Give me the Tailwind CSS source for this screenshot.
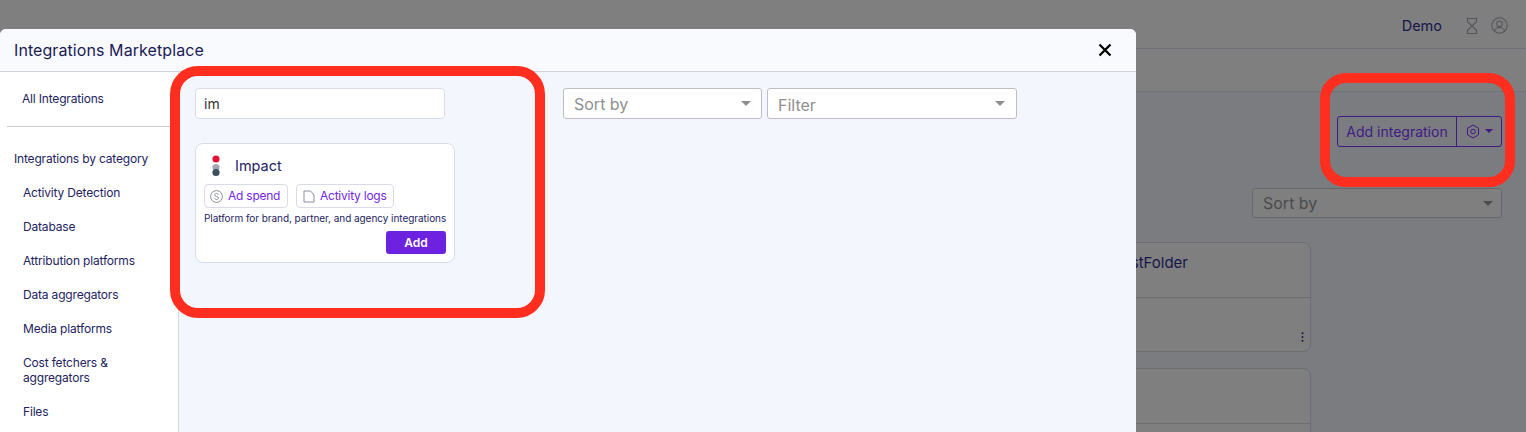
<!doctype html>
<html>
<head>
<meta charset="utf-8">
<script src="https://cdn.jsdelivr.net/npm/@tailwindcss/browser@4"></script>
</head>
<body class="font-['Inter','Noto_Sans',sans-serif]">
<div class="relative w-[1526px] h-[432px] overflow-hidden bg-[#7b7c80] text-[#1b1a55]">
  <!-- page behind the scrim -->
  <header class="h-[49px] bg-[#7f7f7f] border-b border-[#6f7078] flex items-center justify-end pr-[18px]">
    <span class="text-[14.500px] text-[#16154a] mr-[22px] mt-[3px]">Demo</span>
    <svg class="w-[16px] h-[18px] mr-[11px] mt-[3px]" viewBox="0 0 16 18" fill="none" stroke="#55565c" stroke-width="1.200"><path d="M2.500 1.500h11M2.500 16.500h11M3.500 1.500v3.200L8 9l4.500-4.300V1.500M3.500 16.500v-3.200L8 9l4.500 4.300v3.200"/></svg>
    <svg class="w-[17px] h-[17px] mt-[3px]" viewBox="0 0 17 17" fill="none" stroke="#55565c" stroke-width="1.100"><circle cx="8.500" cy="8.500" r="7.700"/><circle cx="8.500" cy="6.800" r="2.800"/><path d="M3.300 14c1-2.500 3-3.500 5.200-3.500s4.200 1 5.200 3.500"/></svg>
  </header>
  <div class="h-[43px] bg-[#7f7f7f] border-b border-[#6f7078]"></div>
  <main class="flex flex-col items-end pr-[24px] pt-[24px]">
    <div class="flex w-[165px] h-[31px] border border-[#3f1a86] rounded-[3px] text-[#3f1a86] text-[14px]">
      <span class="w-[119px] border-r border-[#3f1a86] flex items-center justify-center">Add integration</span>
      <span class="flex-1 flex items-center justify-center gap-[5px]">
        <svg class="w-[14px] h-[15px]" viewBox="0 0 14 15" fill="none" stroke="#3f1a86" stroke-width="1"><path d="M7 1l5.500 3.200v6.600L7 14 1.500 10.800V4.200z"/><circle cx="7" cy="7.500" r="2.300"/></svg>
        <span class="w-0 h-0 border-x-[4px] border-x-transparent border-t-[4px] border-t-[#3f1a86] mb-[2px]"></span>
      </span>
    </div>
    <div class="w-[250px] h-[30px] mt-[41px] border border-[#68686c] rounded-[3px] bg-[#7f7f7f] flex items-center justify-between pl-[10px] pr-[8px] text-[16px] text-[#4b4b4d]">
      <span>Sort by</span>
      <span class="w-0 h-0 border-x-[5px] border-x-transparent border-t-[5px] border-t-[#4d4d50]"></span>
    </div>
    <div class="mr-[191px] w-[400px] h-[110px] mt-[24px] border border-[#6c6d72] rounded-[8px] bg-[#7f7f7f] flex flex-col">
      <div class="h-[55px] shrink-0 border-b border-[#6c6d72] flex justify-end pr-[122px] pt-[9px] text-[15px] text-[#16154a]"><span>testFolder</span></div>
      <div class="flex-1 flex items-end justify-end pr-[6px] pb-[9px]">
        <svg class="w-[3px] h-[10px]" viewBox="0 0 3 10" fill="#16154a"><circle cx="1.500" cy="1.200" r="1"/><circle cx="1.500" cy="5" r="1"/><circle cx="1.500" cy="8.800" r="1"/></svg>
      </div>
    </div>
    <div class="mr-[191px] w-[400px] h-[110px] mt-[16px] border border-[#6c6d72] rounded-[8px] bg-[#7f7f7f]">
      <div class="h-[55px] border-b border-[#6c6d72]"></div>
    </div>
  </main>

  <!-- modal -->
  <section class="absolute left-0 top-[29px] w-[1136px] h-[403px] rounded-tr-[6px] rounded-tl-[6px] overflow-hidden bg-[#f3f6fd] flex flex-col">
    <div class="h-[43px] shrink-0 bg-[#f9fafe] border-b border-[#cfd1dc] flex items-center justify-between pl-[14px] pr-[24px]">
      <h1 class="text-[16px] tracking-[0.005em] text-[#1b1a55]">Integrations Marketplace</h1>
      <svg class="w-[14px] h-[14px]" viewBox="0 0 14 14" fill="none" stroke="#000" stroke-width="2.300"><path d="M1.500 1.500l11 11M12.500 1.500l-11 11"/></svg>
    </div>
    <div class="flex flex-1 min-h-0">
      <aside class="w-[179px] shrink-0 bg-white border-r border-[#d6d9e6] text-[12px] leading-[15px] tracking-[-0.015em] text-[#24235f]">
        <div class="pl-[22px] pt-[19px] h-[54px]"><span>All Integrations</span></div>
        <div class="mx-[7px] border-t border-[#c9cad0]"></div>
        <div class="pl-[14px] mt-[24px]">Integrations by category</div>
        <ul class="pl-[23px] pr-[20px] mt-[19px] flex flex-col gap-[19px]">
          <li>Activity Detection</li>
          <li>Database</li>
          <li>Attribution platforms</li>
          <li>Data aggregators</li>
          <li>Media platforms</li>
          <li>Cost fetchers &amp; aggregators</li>
          <li>Files</li>
        </ul>
      </aside>
      <div class="flex-1 pl-[16px] pt-[16px]">
        <div class="flex items-start">
          <div class="w-[250px] h-[31px] bg-white border border-[#d9dce8] rounded-[4px] flex items-center pl-[8px] text-[14px] text-[#333]">im</div>
          <div class="ml-[118px] w-[199px] h-[31px] bg-white border border-[#bdbdc4] rounded-[3px] flex items-center justify-between pl-[10px] pr-[10px] text-[16px] text-[#8f8f8f]">
            <span>Sort by</span>
            <span class="w-0 h-0 border-x-[5px] border-x-transparent border-t-[5px] border-t-[#8f8f8f]"></span>
          </div>
          <div class="ml-[5px] w-[250px] h-[31px] bg-white border border-[#bdbdc4] rounded-[3px] flex items-center justify-between pl-[10px] pr-[11px] text-[16px] text-[#8f8f8f]">
            <span class="mt-[2px]">Filter</span>
            <span class="w-0 h-0 border-x-[5px] border-x-transparent border-t-[5px] border-t-[#8f8f8f]"></span>
          </div>
        </div>
        <article class="mt-[24px] w-[260px] h-[120px] bg-white border border-[#d9dce8] rounded-[8px] pl-[8px] pr-[8px] pt-[11px]">
          <div class="flex items-center h-[22px]">
            <svg class="w-[8px] h-[22px] ml-[8px] mr-[15px]" viewBox="0 0 8 22"><circle cx="4" cy="4" r="3.600" fill="#e31337"/><circle cx="4" cy="12.500" r="3.600" fill="#a2a8ae"/><circle cx="4" cy="17.500" r="3.600" fill="#3f4f5c"/></svg>
            <span class="text-[14.500px] text-[#24235f]">Impact</span>
          </div>
          <div class="flex gap-[8px] mt-[7px] tracking-[-0.015em]">
            <span class="h-[24px] w-[84px] pl-[5px] border border-[#d9dce8] rounded-[4px] flex items-center gap-[5px] text-[12px] text-[#7326e6] whitespace-nowrap">
              <svg class="w-[13px] h-[13px]" viewBox="0 0 13 13" fill="none" stroke="#8b8e9e" stroke-width="1"><circle cx="6.500" cy="6.500" r="5.900"/><path d="M8.300 4.700c-.3-.8-1-1.200-1.800-1.200-1 0-1.800.6-1.800 1.500 0 2 3.700 1 3.700 3 0 .9-.8 1.500-1.900 1.500-.9 0-1.600-.5-1.900-1.300"/></svg>
              Ad spend
            </span>
            <span class="h-[24px] w-[98px] pl-[6px] border border-[#d9dce8] rounded-[4px] flex items-center gap-[5px] text-[12px] text-[#7326e6] whitespace-nowrap">
              <svg class="w-[12px] h-[13px]" viewBox="0 0 12 13" fill="none" stroke="#8b8e9e" stroke-width="1"><path d="M1 1h6.500L11 5v7H1z"/></svg>
              Activity logs
            </span>
          </div>
          <p class="mt-[3px] text-[10px] leading-[15px] tracking-[-0.005em] text-[#24235f] whitespace-nowrap">Platform for brand, partner, and agency integrations</p>
          <div class="flex justify-end mt-[5px]">
            <button class="w-[60px] h-[23px] rounded-[3px] bg-[#6d22e0] text-white text-[12px] font-semibold">Add</button>
          </div>
        </article>
      </div>
    </div>
  </section>

  <!-- annotations -->
  <div class="absolute left-[170px] top-[66px] w-[375px] h-[252px] border-[10px] border-[#ff2e1f] rounded-[28px]"></div>
  <div class="absolute left-[1320px] top-[73px] w-[195px] h-[114px] border-[10px] border-[#ff2e1f] rounded-[26px]"></div>
</div>
</body>
</html>
